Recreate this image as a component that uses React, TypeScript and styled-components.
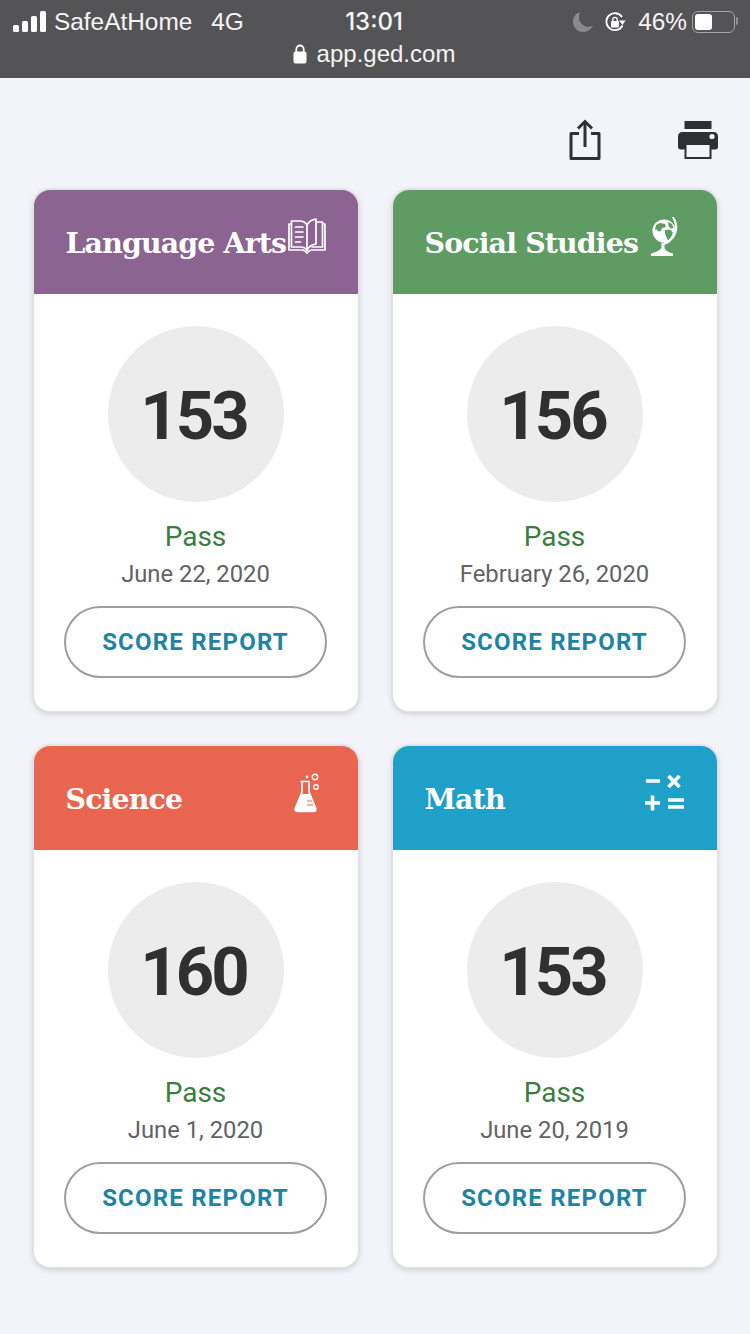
import React from 'react';
import styled, { createGlobalStyle } from 'styled-components';

const GlobalStyle = createGlobalStyle`
  html, body {
    margin: 0;
    padding: 0;
    background: #f3f4f9;
    font-family: 'Roboto', sans-serif;
  }
`;

const BookIcon = () => (
  <svg width="38" height="38" viewBox="0 0 38 38" fill="none" stroke="#fff" strokeWidth="1.700" strokeLinejoin="round" strokeLinecap="round">
    <path d="M3.500 6H1v26h13c2 0 3.500.8 5 3 1.500-2.200 3-3 5-3h13V6h-2.500" />
    <path d="M3.500 3h8.500c3 0 5.500 1.500 7 4v25c-1.500-2-4-3-7-3H3.500z" />
    <path d="M19 7c1.500-3 5-5.500 9-6v25c-4 .5-7.500 3-9 6" />
    <path d="M28 4h6.500v25H24" />
    <path d="M7.500 9h7.500M7.500 14h7.500M7.500 19h7.500M7.500 24h5" />
  </svg>
);

const GlobeIcon = () => (
  <svg width="30" height="39" viewBox="0 0 30 39" fill="#fff">
    <path
      fillRule="evenodd"
      d="M14 2.500a11.500 11.500 0 1 1 0 23a11.500 11.500 0 0 1 0-23zM6 8l4-2 5 1 1 3-4 1-1 3-3 .5-1-2-2 .5zM15 13l5-.5 3 3-2 5-3 3-1.500-3-1.500-4zM18 5l4 2 1.500 4-3 .5-2-2.500z"
    />
    <path d="M22 0l1.700-.2c3.500 4.500 4.800 11 2.300 17-2.500 6.500-8.500 11-14.500 11.700v-2.400c5-.6 10-4.300 12.200-9.800C25.800 11 25 5 22 0z" />
    <path d="M11.500 28h3v2.500c.5 3 4 4.700 8.500 6V39H1v-2.500c4.500-1.300 9.500-3 10.500-6z" />
  </svg>
);

const FlaskIcon = () => (
  <svg width="26" height="40" viewBox="0 0 26 40">
    <path d="M6.500 8.500h9M8 8.500V19L1.500 35c-.8 2 .5 3.500 2.500 3.500h15c2 0 3.300-1.500 2.500-3.500L15 19V8.500" fill="none" stroke="#fff" strokeWidth="1.700" />
    <path d="M6.500 21h10l6 17.500H1z" fill="#fff" />
    <circle cx="13" cy="4" r="1.400" fill="#fff" />
    <circle cx="21" cy="4" r="2.700" fill="none" stroke="#fff" strokeWidth="1.400" />
    <circle cx="22" cy="14" r="2.300" fill="none" stroke="#fff" strokeWidth="1.400" />
    <path d="M13 28h5M13 32h6" stroke="#e8664f" strokeWidth="1.200" />
  </svg>
);

const MathIcon = () => (
  <svg width="40" height="38" viewBox="0 0 40 38" fill="none" stroke="#fff" strokeWidth="3.600">
    <path d="M1 6h14M23.500 1l11 11M34.500 1l-11 11M0 28h15M7.500 20.500v15M23 25h16M23 32h16" />
  </svg>
);

const ShareIcon = () => (
  <svg width="34" height="42" viewBox="0 0 34 42" fill="none" stroke="#2f3034" strokeWidth="3">
    <path d="M11 14.500H3v25h28v-25h-8" strokeLinejoin="round" />
    <path d="M17 28V3" />
    <path d="M10 9.500L17 2.500l7 7" />
  </svg>
);

const PrintIcon = () => (
  <svg width="40" height="38" viewBox="0 0 40 38" fill="#2f3034">
    <path d="M6.500 0h27v8h-27z" />
    <path d="M4 11h32c2 0 4 2 4 4v11c0 1.500-1 2.500-2.500 2.500H2.500C1 28.500 0 27.500 0 26V15c0-2 2-4 4-4z" />
    <circle cx="34" cy="15.500" r="2.600" fill="#f3f4f9" />
    <rect x="7.500" y="23" width="25" height="14" fill="#f3f4f9" stroke="#2f3034" strokeWidth="2" />
  </svg>
);

const SignalIcon = () => (
  <svg width="34" height="22" viewBox="0 0 34 22" fill="#fff">
    <rect x="0" y="14" width="6" height="7" rx="1.500" />
    <rect x="9" y="10" width="6" height="11" rx="1.500" />
    <rect x="18" y="5" width="6" height="16" rx="1.500" />
    <rect x="27" y="0" width="6" height="21" rx="1.500" />
  </svg>
);

const MoonIcon = () => (
  <svg width="22" height="22" viewBox="0 0 22 22" fill="#8a8a8c">
    <path d="M8 1C3.500 2.500 1 6 1 10.500 1 16.500 5.500 21 11 21c4.500 0 8-2.500 10-6.500-1.500.8-3 1.200-4.500 1.200C11 15.700 7 11.500 7 6.500 7 4.500 7.300 2.500 8 1z" />
  </svg>
);

const RotationIcon = () => (
  <svg width="22" height="22" viewBox="0 0 22 22">
    <path d="M18.500 14.500A8.500 8.500 0 1 1 18 6" fill="none" stroke="#fff" strokeWidth="1.800" />
    <path d="M15 9.500h6.500L18.500 14z" fill="#fff" />
    <rect x="7" y="10" width="8" height="6.500" rx="1" fill="#fff" />
    <path d="M8.800 10V8.500a2.200 2.200 0 0 1 4.400 0V10" fill="none" stroke="#fff" strokeWidth="1.300" />
  </svg>
);

const LockIcon = () => (
  <svg width="14" height="20" viewBox="0 0 14 20">
    <rect x="0.500" y="7.500" width="13" height="12" rx="2" fill="#fff" />
    <path d="M3.300 8V5.200a3.700 3.700 0 0 1 7.400 0V8" fill="none" stroke="#fff" strokeWidth="1.800" />
  </svg>
);

const StatusBar = styled.header`
  height: 78px;
  box-sizing: border-box;
  padding: 7px 15px 0 13px;
  background: #545456;
  color: #f4f4f5;
  font-family: 'Liberation Sans', sans-serif;
`;

const StatusRow = styled.div`
  display: grid;
  grid-template-columns: 1fr auto 1fr;
  align-items: center;
  height: 28px;
  font-size: 24.400px;
`;

const StatusLeft = styled.div`
  display: flex;
  align-items: center;
  gap: 7px;
`;

const Carrier = styled.span`
  margin-right: 12px;
`;

const Clock = styled.span`
  font-weight: 500;
  font-family: 'Inter', sans-serif;
  font-size: 24px;
`;

const StatusRight = styled.div`
  display: flex;
  justify-content: flex-end;
  align-items: center;
  gap: 10px;
`;

const Percent = styled.span`
  margin: 0 -5px 0 2px;
`;

const Battery = styled.div`
  position: relative;
  width: 43px;
  height: 22px;
  box-sizing: border-box;
  border: 1.500px solid #a3a3a5;
  border-radius: 6px;
  padding: 2px;

  &::before {
    content: '';
    display: block;
    width: 46%;
    height: 100%;
    background: #fff;
    border-radius: 3px;
  }

  &::after {
    content: '';
    position: absolute;
    top: 5px;
    right: -4px;
    width: 2px;
    height: 8px;
    background: #8f8f91;
    border-radius: 0 2px 2px 0;
  }
`;

const AddressRow = styled.div`
  display: flex;
  justify-content: center;
  align-items: center;
  gap: 10px;
  margin-top: 5px;
  font-size: 24px;
`;

const Toolbar = styled.div`
  display: flex;
  justify-content: flex-end;
  align-items: center;
  gap: 76px;
  height: 42px;
  padding: 41px 32px 0 0;
`;

const Grid = styled.main`
  display: grid;
  grid-template-columns: repeat(2, 324px);
  gap: 35px;
  justify-content: center;
  margin: 29px 0 0 0;
  padding: 0 33px 67px 33px;
`;

const Card = styled.section`
  display: flex;
  flex-direction: column;
  align-items: center;
  height: 521px;
  background: #fff;
  border-radius: 16px;
  overflow: hidden;
  box-shadow: 0 0 0 1.500px #e0e0e5, 0 2px 6px rgba(60, 60, 70, 0.28);
`;

const CardHeader = styled.div<{ $color: string }>`
  display: flex;
  justify-content: space-between;
  align-items: center;
  align-self: stretch;
  height: 104px;
  box-sizing: border-box;
  padding: 0 32px;
  background: ${(p) => p.$color};
  color: #fff;
`;

const Title = styled.h2`
  margin: 2px 0 0;
  font-family: 'DejaVu Serif', serif;
  font-weight: 700;
  font-size: 28.400px;
  letter-spacing: -0.850px;
  white-space: nowrap;
`;

const IconSlot = styled.span<{ $right: number; $lift: number }>`
  display: flex;
  flex-shrink: 0;
  margin: 0 ${(p) => p.$right}px ${(p) => p.$lift}px 0;
`;

const ScoreCircle = styled.div`
  display: flex;
  justify-content: center;
  align-items: center;
  width: 176px;
  height: 176px;
  box-sizing: border-box;
  padding: 4px 4px 0 0;
  margin-top: 32px;
  border-radius: 50%;
  background: #ececec;
  color: #303030;
  font-size: 67px;
  font-weight: 700;
  letter-spacing: -3px;
`;

const Result = styled.div`
  margin-top: 18px;
  height: 34px;
  line-height: 34px;
  font-size: 28px;
  color: #3b7d3f;
`;

const DateLine = styled.div`
  margin-top: 5px;
  height: 30px;
  line-height: 30px;
  font-size: 23.800px;
  color: #636363;
`;

const ReportButton = styled.button`
  width: 263px;
  height: 72px;
  margin-top: 17px;
  background: #fff;
  border: 2px solid #9e9e9e;
  border-radius: 36px;
  color: #1f83a5;
  font-family: 'Roboto', sans-serif;
  font-size: 24px;
  font-weight: 700;
  letter-spacing: 1.200px;
`;

const subjects = [
  { title: 'Language Arts', color: '#8b6491', score: 153, date: 'June 22, 2020', icon: <BookIcon />, right: 0, lift: 10 },
  { title: 'Social Studies', color: '#5f9c63', score: 156, date: 'February 26, 2020', icon: <GlobeIcon />, right: 5, lift: 11 },
  { title: 'Science', color: '#e8664f', score: 160, date: 'June 1, 2020', icon: <FlaskIcon />, right: 6, lift: 10 },
  { title: 'Math', color: '#1fa0c8', score: 153, date: 'June 20, 2019', icon: <MathIcon />, right: 0, lift: 9 },
];

export default function App() {
  return (
    <>
      <GlobalStyle />
      <StatusBar>
        <StatusRow>
          <StatusLeft>
            <SignalIcon />
            <Carrier>SafeAtHome</Carrier>
            <span>4G</span>
          </StatusLeft>
          <Clock>13:01</Clock>
          <StatusRight>
            <MoonIcon />
            <RotationIcon />
            <Percent>46%</Percent>
            <Battery />
          </StatusRight>
        </StatusRow>
        <AddressRow>
          <LockIcon />
          <span>app.ged.com</span>
        </AddressRow>
      </StatusBar>
      <Toolbar>
        <ShareIcon />
        <PrintIcon />
      </Toolbar>
      <Grid>
        {subjects.map((s) => (
          <Card key={s.title}>
            <CardHeader $color={s.color}>
              <Title>{s.title}</Title>
              <IconSlot $right={s.right} $lift={s.lift}>{s.icon}</IconSlot>
            </CardHeader>
            <ScoreCircle>{s.score}</ScoreCircle>
            <Result>Pass</Result>
            <DateLine>{s.date}</DateLine>
            <ReportButton>SCORE REPORT</ReportButton>
          </Card>
        ))}
      </Grid>
    </>
  );
}
